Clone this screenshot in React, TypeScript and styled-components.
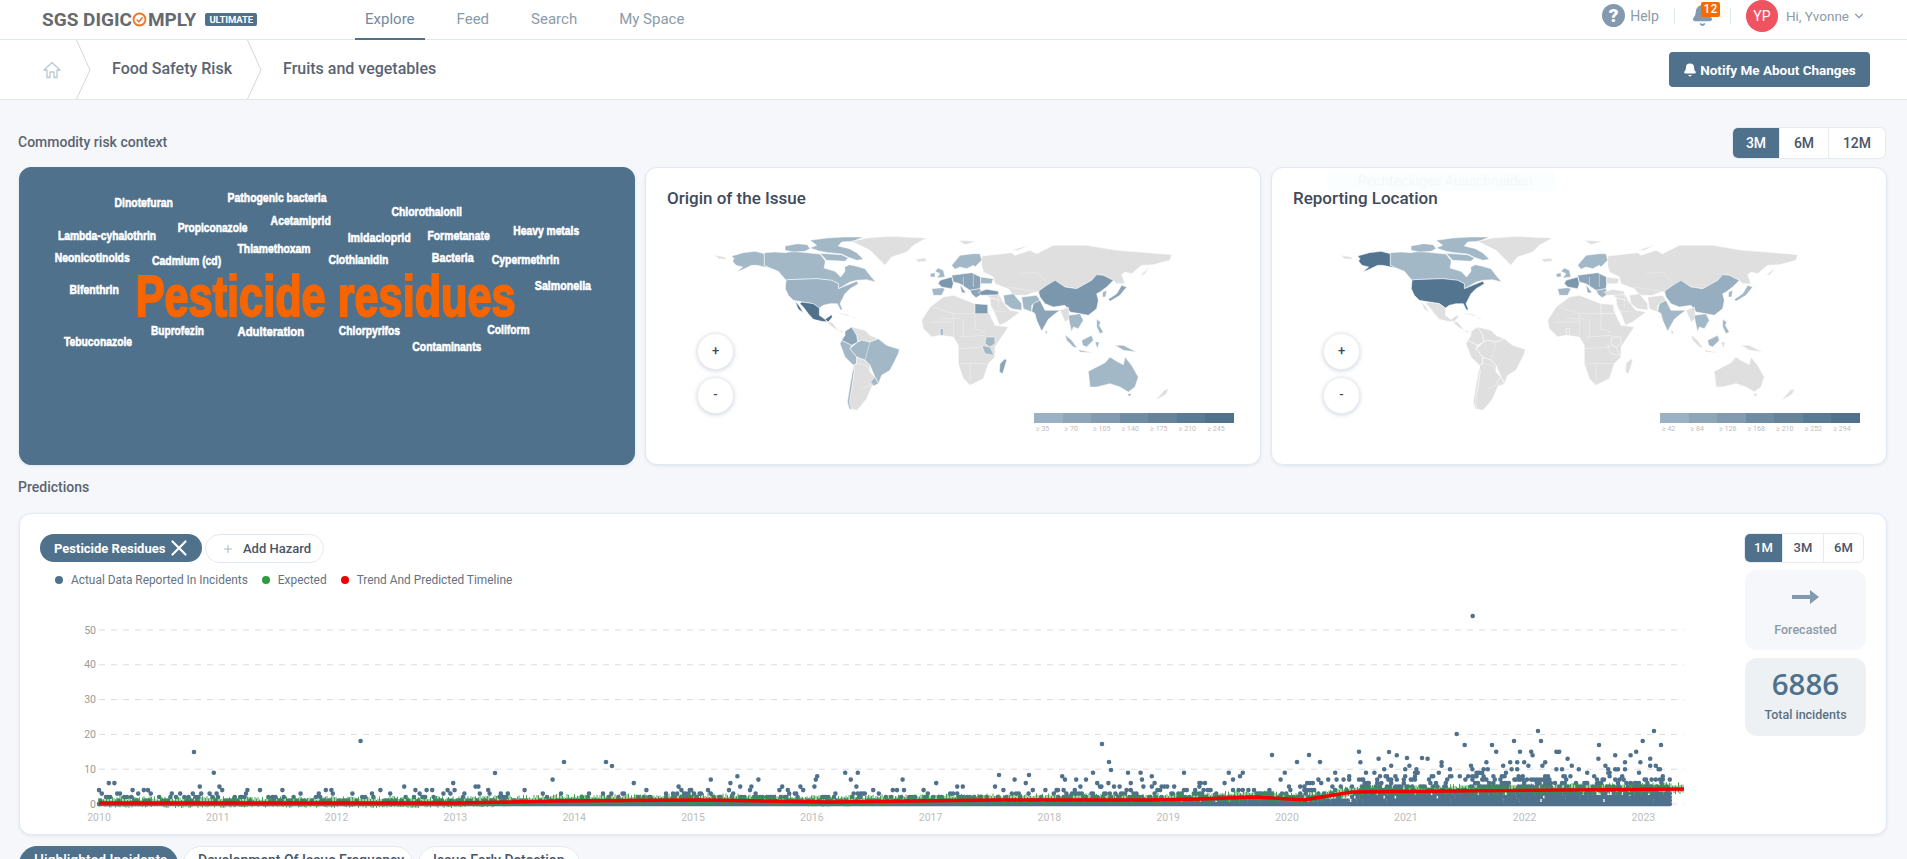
import React from 'react';
import styled, { createGlobalStyle } from 'styled-components';
import { Bell, ChevronDown, Plus, X } from 'lucide-react';

const SLATE = '#4f718c';

const GlobalStyle = createGlobalStyle`
    html, body {
        margin: 0;
        height: 100%;
        overflow: hidden;
        background: #f5f7fa;
        font-family: Roboto, "Liberation Sans", sans-serif;
    }
    * { box-sizing: border-box; }
`;

const Page = styled.div`
    height: 100vh;
    overflow: hidden;
`;

/* top bar */
const TopBar = styled.header`
    height: 40px;
    padding: 0 41px 0 42px;
    display: flex;
    align-items: flex-start;
    background: #fff;
    border-bottom: 1px solid #e1e7ef;
`;

const Logo = styled.div`
    height: 39px;
    display: flex;
    align-items: center;
    color: #666a6e;
    font-size: 19px;
    font-weight: 700;
    white-space: nowrap;
`;

const LogoRing = styled.svg`
    width: 15px;
    height: 15px;
    margin: 0 0.5px;
`;

const PlanBadge = styled.span`
    margin-left: 9px;
    padding: 0 4px;
    height: 13px;
    line-height: 13px;
    border-radius: 2px;
    background: ${SLATE};
    color: #fff;
    font-size: 9.5px;
    font-weight: 700;
    letter-spacing: -0.1px;
`;

const Nav = styled.nav`
    margin-left: 98px;
    display: flex;
    gap: 22px;
`;

const NavItem = styled.a<{ $active?: boolean }>`
    height: 40px;
    padding: 0 10px;
    display: flex;
    align-items: center;
    color: ${p => (p.$active ? '#718aa0' : '#8a9bab')};
    font-size: 15px;
    border-bottom: 2px solid ${p => (p.$active ? SLATE : 'transparent')};
`;

const TopRight = styled.div`
    margin-left: auto;
    height: 31px;
    display: flex;
    align-items: center;
    color: #8a9bab;
    font-size: 14px;
`;

const HelpIcon = styled.span`
    width: 23px;
    height: 23px;
    margin-right: 5px;
    border-radius: 50%;
    background: #8299ae;
    color: #fff;
    font-size: 19px;
    font-weight: 900;
    line-height: 23px;
    text-align: center;
`;

const HelpLabel = styled.span`
    margin-right: 15px;
`;

const Divider = styled.span`
    width: 1px;
    height: 16px;
    background: #dfe5ec;
`;

const BellWrap = styled.div`
    position: relative;
    width: 55px;
    height: 31px;
    display: flex;
    align-items: center;
    padding-left: 16px;
`;

const CountBadge = styled.span`
    position: absolute;
    left: 26px;
    top: 2px;
    width: 19px;
    height: 15px;
    border-radius: 2px;
    background: #f66a00;
    color: #fff;
    font-size: 12px;
    font-weight: 500;
    line-height: 15px;
    text-align: center;
`;

const Avatar = styled.span`
    width: 32px;
    height: 32px;
    margin: 0 8px 0 15px;
    border-radius: 50%;
    background: #ef5360;
    color: #fff;
    font-size: 14px;
    line-height: 32px;
    text-align: center;
`;

const UserName = styled.span`
    margin-right: 3px;
    font-size: 13.5px;
`;

/* breadcrumb */
const CrumbBar = styled.div`
    height: 60px;
    padding: 0 37px 0 43px;
    display: flex;
    align-items: center;
    background: #fff;
    border-bottom: 1px solid #e1e7ef;
`;

const HomeIcon = styled.svg`
    width: 18px;
    height: 18px;
    margin: 0 15px 0 0;
`;

const CrumbArrow = styled.svg`
    width: 15px;
    height: 59px;
`;

const Crumb = styled.span`
    margin: -2px 15px 0 21px;
    color: #5b6472;
    font-size: 16px;
    font-weight: 500;
`;

const NotifyButton = styled.button`
    margin-left: auto;
    width: 201px;
    height: 35px;
    padding: 0;
    border: 0;
    border-radius: 4px;
    background: ${SLATE};
    color: #fff;
    font: 700 13.5px Roboto, sans-serif;
    display: flex;
    align-items: center;
    justify-content: center;
    gap: 3px;
`;

/* page body */
const Content = styled.main`
    padding: 28px 20px 0 19px;
`;

const SectionHead = styled.div`
    height: 30px;
    margin-right: 2px;
    display: flex;
    align-items: center;
    justify-content: space-between;
`;

const SectionTitle = styled.h2`
    margin: -2px 0 0 -1px;
    color: #5b6472;
    font-size: 14px;
    font-weight: 500;
`;

const Toggle = styled.div<{ $w?: number }>`
    ${p => (p.$w ? `width: ${p.$w}px;` : '')}
    display: flex;
    background: #fff;
    border-radius: 5px;
    box-shadow: 0 0 0 1px #e6ebf2;
`;

const ToggleItem = styled.span<{ $active?: boolean; $w: number; $small?: boolean }>`
    width: ${p => p.$w}px;
    height: ${p => (p.$small ? 28 : 30)}px;
    line-height: ${p => (p.$small ? 28 : 30)}px;
    text-align: center;
    color: ${p => (p.$active ? '#fff' : '#4a5568')};
    background: ${p => (p.$active ? SLATE : 'transparent')};
    font-size: ${p => (p.$small ? 13 : 14)}px;
    font-weight: 500;
    border-right: 1px solid #e6ebf2;
    &:first-child { border-radius: 5px 0 0 5px; }
    &:last-child { border-right: 0; }
`;

const CardRow = styled.section`
    margin-top: 9px;
    height: 298px;
    display: grid;
    grid-template-columns: repeat(3, 1fr);
    gap: 10px;
`;

const Card = styled.div`
    position: relative;
    background: #fff;
    border: 1px solid #e3e9f2;
    border-radius: 12px;
    box-shadow: 0 1px 3px rgba(90, 110, 140, 0.12);
`;

const CloudCard = styled(Card)`
    background: ${SLATE};
    border-color: ${SLATE};
    overflow: hidden;
`;

const CloudSvg = styled.svg`
    display: block;
    width: 100%;
    height: 100%;
`;

const CloudWord = styled.text<{ $big?: boolean }>`
    font-family: "Liberation Sans", Arial, sans-serif;
    font-weight: 700;
    font-size: ${p => (p.$big ? 57 : 13)}px;
    fill: ${p => (p.$big ? '#f66500' : '#fff')};
    stroke: ${p => (p.$big ? '#f66500' : '#fff')};
    stroke-width: ${p => (p.$big ? 2 : 0.6)}px;
`;

const MapCard = styled(Card)`
    padding: 20px 0 0 21px;
`;

const MapTitle = styled.h3`
    margin: 0;
    height: 20px;
    color: #3f4a5a;
    font-size: 17px;
    font-weight: 500;
    line-height: 20px;
`;

const MapSvg = styled.svg`
    display: block;
    width: 480px;
    height: 185px;
    margin: 24px 0 0 43px;
    filter: blur(0.25px);
`;

const ZoomStack = styled.div`
    position: absolute;
    left: 51px;
    top: 165px;
    display: flex;
    flex-direction: column;
    gap: 7px;
`;

const ZoomButton = styled.span`
    width: 37px;
    height: 37px;
    border-radius: 50%;
    background: #fff;
    border: 1px solid #eaeef3;
    box-shadow: 0 1px 4px rgba(90, 110, 140, 0.3);
    color: #3f4a5a;
    font-size: 13px;
    font-weight: 500;
    line-height: 34px;
    text-align: center;
`;

const MapLegend = styled.div`
    position: absolute;
    right: 26px;
    top: 245px;
    width: 200px;
    display: grid;
    grid-template-columns: repeat(7, 1fr);
`;

const LegendStep = styled.div<{ $color: string }>`
    border-top: 10px solid ${p => p.$color};
    padding: 2px 0 0 2px;
    color: #bdbdbd;
    font-size: 7px;
    line-height: 9px;
`;

const GhostHint = styled.div`
    position: absolute;
    left: 55px;
    top: 4px;
    width: 228px;
    height: 19px;
    padding-left: 31px;
    background: rgba(240, 253, 253, 0.35);
    color: #f5f8fa;
    font-size: 14px;
    line-height: 19px;
`;

const PredictionHead = styled.div`
    margin-top: 13px;
    height: 20px;
    display: flex;
    align-items: center;
`;

const PredictionCard = styled(Card)`
    margin-top: 15px;
    height: 322px;
    padding: 20px 20px 0 20px;
    display: flex;
    justify-content: space-between;
`;

const ChipRow = styled.div`
    display: flex;
    gap: 3px;
`;

const HazardChip = styled.span`
    width: 162px;
    height: 28px;
    padding-left: 14px;
    display: flex;
    align-items: center;
    gap: 1px;
    border-radius: 14px;
    background: ${SLATE};
    color: #fff;
    font-size: 13px;
    font-weight: 700;
`;

const AddChip = styled.span`
    width: 119px;
    height: 29px;
    padding-left: 16px;
    display: flex;
    align-items: center;
    gap: 9px;
    border: 1px solid #e3e9f2;
    border-radius: 15px;
    color: #4a5568;
    font-size: 13px;
    font-weight: 500;
`;

const ChartLegend = styled.div`
    height: 16px;
    margin-top: 9px;
    padding-left: 15px;
    display: flex;
    align-items: center;
    color: #66727f;
    font-size: 11.9px;
`;

const LegendDot = styled.i<{ $color: string }>`
    width: 8px;
    height: 8px;
    margin-right: 8px;
    border-radius: 50%;
    background: ${p => p.$color};
`;

const LegendLabel = styled.span`
    margin-right: 14px;
`;

const ChartSvg = styled.svg`
    display: block;
    width: 1620px;
    height: 225px;
    margin: 12px 0 0 29px;
`;

const SidePanel = styled.aside`
    width: 121px;
    display: flex;
    flex-direction: column;
`;

const ForecastBox = styled.div`
    height: 80px;
    margin-top: 8px;
    padding-top: 20px;
    border-radius: 12px;
    background: #f5f7fa;
    color: #8c9aa8;
    font-size: 12.5px;
    font-weight: 500;
    text-align: center;
`;

const ForecastArrow = styled.svg`
    display: block;
    width: 27px;
    height: 14px;
    margin: 0 auto 18px;
`;

const TotalBox = styled.div`
    height: 78px;
    margin-top: 8px;
    padding-top: 8px;
    border-radius: 12px;
    background: #eef1f4;
    color: #5a7186;
    font-size: 12.5px;
    font-weight: 500;
    text-align: center;
`;

const TotalValue = styled.div`
    margin-bottom: 5px;
    color: ${SLATE};
    font-family: "Open Sans", sans-serif;
    font-size: 29.5px;
    font-weight: 550;
    line-height: 36px;
`;

const TabRow = styled.div`
    margin-top: 11px;
    display: flex;
    gap: 5px;
`;

const Tab = styled.span<{ $active?: boolean; $w: number }>`
    width: ${p => p.$w}px;
    height: 36px;
    padding-left: 14px;
    border: 1px solid ${p => (p.$active ? SLATE : '#e3e9f2')};
    border-radius: 18px;
    background: ${p => (p.$active ? SLATE : '#fff')};
    color: ${p => (p.$active ? '#fff' : '#4a5568')};
    font-size: 14px;
    font-weight: 500;
    line-height: 26px;
    white-space: nowrap;
`;

/* word cloud, coordinates are px inside the card */
const WORDS: [string, number, number, number][] = [
    ['Dinotefuran', 95.2, 58.7, 34.3],
    ['Pathogenic bacteria', 209, 99.6, 29.3],
    ['Chlorothalonil', 374, 71, 43.3],
    ['Acetamiprid', 252.3, 60.7, 52.3],
    ['Propiconazole', 158.7, 70.3, 59.3],
    ['Lambda-cyhalothrin', 38.2, 98.8, 67.3],
    ['Imidacloprid', 329.9, 63.5, 69.3],
    ['Formetanate', 410.2, 62.7, 67.3],
    ['Heavy metals', 496.6, 66.3, 62.3],
    ['Thiamethoxam', 219, 73.5, 81.3],
    ['Neonicotinoids', 35, 75.5, 90.3],
    ['Cadmium (cd)', 133, 69.5, 93.3],
    ['Clothianidin', 310.6, 60.3, 92.3],
    ['Bacteria', 414.6, 42.2, 90.3],
    ['Cypermethrin', 475, 67.9, 92.3],
    ['Bifenthrin', 49.8, 49.8, 122.3],
    ['Salmonella', 518.3, 56.6, 118.3],
    ['Buprofezin', 131.8, 53.4, 163.3],
    ['Adulteration', 219, 67.1, 164],
    ['Chlorpyrifos', 321, 61.5, 163.3],
    ['Coliform', 470.5, 42.6, 162.3],
    ['Contaminants', 395, 69.5, 179.3],
    ['Tebuconazole', 44.2, 68.7, 174.3],
];

/* world map shapes, traced at 3x. o = colour on origin map, r = on reporting map */
const G = '#dfdfdf';
const L = '#a3b8c7';
const M = '#8ba4b7';
const C = '#7a97ad';
const D = '#4f718c';
const U = '#537590';

type Region = { pts: string; o?: string; r?: string };

const NEW_WORLD: Region[] = [
    { pts: '15,70 45,75 50,82 25,80' },
    { pts: '65,72 100,62 135,58 163,65 163,100 178,108 165,105 140,100 125,100 100,112 80,120 98,105 78,100 68,88 72,80', o: L, r: U },
    { pts: '163,62 195,60 225,62 250,58 290,62 330,66 345,85 345,95 342,108 375,118 392,135 405,118 404,105 418,98 440,103 465,110 480,130 497,150 470,143 440,145 420,150 395,165 385,170 385,155 365,145 320,140 235,143 228,145 205,118 180,108 163,100', o: L, r: L },
    { pts: '330,64 395,68 415,78 405,88 350,85', o: L, r: L },
    { pts: '225,42 262,35 292,38 300,50 285,58 250,60 225,55', o: L, r: L },
    { pts: '300,25 350,18 400,15 460,15 430,28 395,30 385,42 418,50 440,62 460,82 440,85 415,76 395,66 355,62 330,58 300,48 320,40', o: L, r: L },
    { pts: '228,145 235,143 320,140 365,145 385,155 385,170 410,160 440,148 445,155 420,170 405,185 395,205 390,215 397,232 392,235 382,215 360,215 340,220 328,228 310,215 280,210 250,205 235,190 226,170', o: '#9db2c3', r: U },
    { pts: '275,210 310,215 328,228 328,250 345,262 365,248 367,255 355,270 335,268 310,262 295,245 280,225 270,215', o: D },
    { pts: '255,208 268,222 280,242 265,232', o: D },
    { pts: '345,262 355,270 365,270 385,295 400,298 395,302 375,290 360,280' },
    { pts: '375,240 410,245 425,255 400,250', o: '#efefef', r: '#efefef' },
    { pts: '425,255 440,258 430,262', o: '#efefef', r: '#efefef' },
    { pts: '425,285 465,295 480,310 505,320 480,330 455,325 443,330 440,310' },
    { pts: '405,298 425,285 440,310 443,330 425,340 415,335 395,325 405,310', o: M },
    { pts: '390,335 395,325 415,335 425,340 420,350 440,375 440,395 430,400 405,375', o: L },
    { pts: '425,345 443,330 455,325 480,330 505,320 530,340 568,352 565,365 550,395 540,415 515,430 505,455 495,435 480,400 465,385 440,375 420,350', o: L },
    { pts: '440,375 465,385 480,400 480,420 495,435 500,445 485,465 470,500 450,525 440,535 420,530 415,510 425,470 432,420 430,400 440,395' },
    { pts: '430,400 432,420 425,470 418,510 425,535 440,540 418,530 412,510 420,460 428,415', o: L },
    { pts: '495,435 505,455 490,462 482,450', o: L },
    { pts: '425,28 470,18 540,13 650,18 610,40 590,60 545,75 525,100 505,80 480,55' },
    { pts: '615,82 645,78 650,88 625,90' },
];

const OLD_WORLD: Region[] = [
    { pts: '-55,265 -30,225 10,195 40,190 105,215 143,218 148,245 165,280 205,285 185,315 165,345 165,375 145,395 130,440 90,460 70,440 55,395 55,340 40,315 0,310 -25,315 -50,290' },
    { pts: '150,197 185,205 210,235 240,240 200,270 178,280 165,245 152,220' },
    { pts: '140,190 175,186 195,215 212,236 185,206 150,197' },
    { pts: '55,25 110,28 75,38' },
    { pts: '215,55 270,38 235,55' },
    { pts: '125,72 160,68 215,62 225,70 270,55 290,65 340,40 440,40 530,55 600,60 695,68 690,85 640,98 605,100 575,125 555,120 545,128 555,155 530,155 520,145 490,130 470,130 455,145 410,170 375,165 345,148 320,160 295,178 270,185 260,190 220,190 205,170 190,165 165,155 160,135 130,120 125,100' },
    { pts: '600,130 630,105 612,128' },
    { pts: '105,215 143,218 143,245 105,245', o: '#7f9bb0' },
    { pts: '138,315 165,315 165,335 150,345 135,335', o: L },
    { pts: '125,340 150,345 162,370 135,365', o: L },
    { pts: '195,380 200,385 188,425 178,420 180,395', o: M },
    { pts: '0,290 10,290 10,310 2,310', o: L },
    { pts: '-5,108 10,115 15,135 -10,138 0,125 -15,118', o: L, r: L },
    { pts: '-30,125 -15,122 -15,135 -28,135', o: L, r: L },
    { pts: '35,100 60,70 100,65 120,65 125,85 105,105 100,100 80,110 60,105 45,112', o: L, r: L },
    { pts: '35,130 95,122 122,135 122,155 120,170 90,175 60,155 40,150', o: M, r: M },
    { pts: '122,135 160,140 155,155 122,155', o: L, r: '#dfdfdf' },
    { pts: '90,175 120,170 127,186 108,197 96,187', o: M, r: L },
    { pts: '0,145 35,135 40,155 35,170 5,165 -5,155', o: C, r: C },
    { pts: '-25,170 5,167 15,170 5,190 -20,190', o: L, r: L },
    { pts: '60,158 78,182 65,182', o: M, r: M },
    { pts: '115,180 140,172 175,178 175,188 125,190', o: C },
    { pts: '190,190 220,185 245,215 245,235 215,230 195,215', o: L },
    { pts: '245,195 290,190 300,205 275,220 275,240 250,230', o: L },
    { pts: '280,215 300,205 315,235 360,235 345,245 325,262 305,298 290,265 285,245 275,238', o: M, r: L },
    { pts: '315,295 322,300 318,307', o: M, r: L },
    { pts: '295,178 320,160 345,145 375,165 410,170 455,145 470,128 490,130 520,145 500,165 480,180 470,185 475,205 470,230 445,250 420,245 390,240 375,220 340,225 315,215 300,195', o: C, r: '#96aec0' },
    { pts: '488,180 500,175 497,195 487,195', o: L, r: L },
    { pts: '545,160 560,165 540,190 510,208 505,202 530,185', o: M, r: L },
    { pts: '360,235 385,225 390,260 375,270' },
    { pts: '385,250 420,245 430,265 415,290 400,285 395,300 388,270', o: L, r: L },
    { pts: '375,308 395,325 412,348 400,345 380,325', o: L },
    { pts: '425,325 455,310 460,325 440,345 428,340', o: L, r: L },
    { pts: '415,353 460,362 420,360', o: L },
    { pts: '465,330 478,330 472,350', o: L },
    { pts: '470,262 482,270 478,280 490,300 480,305 470,285', o: L, r: L },
    { pts: '525,340 550,340 590,360 550,355', o: L },
    { pts: '445,418 495,392 510,375 530,388 550,398 555,375 575,400 595,435 585,465 565,480 540,465 510,455 470,465 450,465', o: L },
    { pts: '562,485 575,485 568,495', o: L },
    { pts: '685,470 680,485 665,495 645,505 660,490 672,475' },
];

const BORDERS =
    'M-20,225 L40,245 L40,310 M40,245 L105,245 L105,290 L135,300 M0,260 L60,260 M60,315 L135,310 M55,350 L130,345 ' +
    'M60,395 L140,395 M90,395 L90,450 M70,260 L70,315 M-30,270 L40,270 M205,165 L300,180 M240,125 L290,120 L320,150 ' +
    'M175,190 L175,230 M70,135 L70,175 M100,125 L100,165 M150,235 L200,240';

const SA_BORDERS = 'M465,385 L480,330 M440,395 L470,400 L480,420 M455,470 L490,455 M643,270 L700,290 M670,235 L690,260';

const ORIGIN_STEPS = ['≥ 35', '≥ 70', '≥ 105', '≥ 140', '≥ 175', '≥ 210', '≥ 245'];
const REPORT_STEPS = ['≥ 42', '≥ 84', '≥ 126', '≥ 168', '≥ 210', '≥ 252', '≥ 294'];
const STEP_COLORS = ['#9cb1c2', '#8fa6b8', '#829bb0', '#6f8ca3', '#668399', '#587a93', SLATE];

/* chart data. svg uses page coordinates through its viewBox */
const yearX = (y: number) => 100 + (y - 2010) * 118.8;
const valueY = (v: number) => 804 - v * 3.48;
const GRID = [0, 10, 20, 30, 40, 50];
const YEARS = Array.from({ length: 14 }, (_, i) => 2010 + i);

const TREND: [number, number][] = [
    [100, 803], [460, 803], [560, 801], [700, 800], [830, 802], [1000, 800], [1150, 800],
    [1200, 799], [1257, 797], [1305, 800], [1353, 792], [1450, 791], [1685, 789],
];

const trendAt = (x: number) => {
    for (let i = 1; i < TREND.length; i++) {
        const [x0, y0] = TREND[i - 1];
        const [x1, y1] = TREND[i];
        if (x <= x1) return y0 + ((y1 - y0) * (x - x0)) / (x1 - x0);
    }
    return 789;
};

const OUTLIERS: [number, number][] = [
    [195, 752], [361.6, 741], [1473.7, 616], [565, 762], [607, 762], [613, 766], [496, 773], [1103, 744],
    [1457.7, 734], [1539, 731], [1655, 731], [1643.7, 741], [1662, 745], [1515, 741], [1542, 741], [1465.7, 745],
    [1493, 745], [1600, 745], [1273, 755], [1310, 755], [1298, 762], [1321, 762], [1390, 752], [1408, 758], [1423, 758],
    [1110, 762], [1112, 770], [1000, 775], [1030, 775],
];

const buildChart = () => {
    let seed = 20230411;
    const rnd = () => {
        seed = (seed + 0x6d2b79f5) | 0;
        let t = Math.imul(seed ^ (seed >>> 15), 1 | seed);
        t = (t + Math.imul(t ^ (t >>> 7), 61 | t)) ^ t;
        return ((t ^ (t >>> 14)) >>> 0) / 4294967296;
    };
    let dots = '';
    let ticks = '';
    for (let x = 100; x < 1672; x += 1.4) {
        dots += `M${x.toFixed(1)} 804h0`;
        const recent = x > yearX(2020.6);
        const mid = x > yearX(2018);
        const later = x > yearX(2014.5);
        const tries = recent ? 9 : mid ? 3 : later ? 2 : 1;
        const chance = recent ? 0.6 : mid ? 0.5 : later ? 0.45 : 0.5;
        const scale = recent ? 3 : mid ? 2.2 : later ? 1.8 : 1.5;
        for (let k = 0; k < tries; k++) {
            if (rnd() < chance) {
                const v = Math.min(recent ? 15 : 9, 1 + Math.floor(-Math.log(rnd() + 0.001) * scale));
                dots += `M${x.toFixed(1)} ${valueY(v).toFixed(1)}h0`;
            }
        }
    }
    OUTLIERS.forEach(([x, y]) => {
        dots += `M${x} ${y}h0`;
    });
    for (let x = 100; x < 1685; x += 1.5) {
        const y = trendAt(x);
        const h = 3 + rnd() * 4;
        ticks += `M${x.toFixed(1)} ${(y - h).toFixed(1)}v${(h + 2 + rnd() * 3).toFixed(1)}`;
    }
    return { dots, ticks };
};

const CHART = buildChart();
const TREND_LINE = TREND.map(p => p.join(',')).join(' ');

const WorldMap = ({ kind }: { kind: 'o' | 'r' }) => (
    <MapSvg viewBox="0 0 1440 555">
        <g stroke="#fff" strokeWidth="1.5" strokeLinejoin="round">
            {NEW_WORLD.map(r => <polygon key={r.pts} points={r.pts} fill={r[kind] || G} />)}
            <path d={SA_BORDERS} fill="none" stroke="#f3f3f3" />
        </g>
        <g transform="translate(690 0)" stroke="#fff" strokeWidth="1.5" strokeLinejoin="round">
            {OLD_WORLD.map(r => <polygon key={r.pts} points={r.pts} fill={r[kind] || G} />)}
            <path d={BORDERS} fill="none" stroke="#f3f3f3" />
        </g>
    </MapSvg>
);

const MapPanel = ({ title, kind, steps, ghost }: { title: string; kind: 'o' | 'r'; steps: string[]; ghost?: boolean }) => (
    <MapCard>
        {ghost && <GhostHint>Rechteckiges Ausschneiden</GhostHint>}
        <MapTitle>{title}</MapTitle>
        <WorldMap kind={kind} />
        <ZoomStack>
            <ZoomButton>+</ZoomButton>
            <ZoomButton>-</ZoomButton>
        </ZoomStack>
        <MapLegend>
            {steps.map((s, i) => <LegendStep key={s} $color={STEP_COLORS[i]}>{s}</LegendStep>)}
        </MapLegend>
    </MapCard>
);

const Arrow = () => (
    <CrumbArrow viewBox="0 0 15 59">
        <path d="M0.5 0 L14 30 L0.5 59" fill="none" stroke="#cdd7e1" />
    </CrumbArrow>
);

const App = () => {
    return (
        <Page>
            <GlobalStyle />
            <TopBar>
                <Logo>
                    SGS DIGIC
                    <LogoRing viewBox="0 0 16 16">
                        <circle cx="8" cy="8" r="6.4" fill="none" stroke="#e8762c" strokeWidth="2" />
                        <path d="M5 8 L7.4 10.4 L11.2 5.6" fill="none" stroke="#e8762c" strokeWidth="1.6" />
                    </LogoRing>
                    MPLY
                    <PlanBadge>ULTIMATE</PlanBadge>
                </Logo>
                <Nav>
                    <NavItem $active>Explore</NavItem>
                    <NavItem>Feed</NavItem>
                    <NavItem>Search</NavItem>
                    <NavItem>My Space</NavItem>
                </Nav>
                <TopRight>
                    <HelpIcon>?</HelpIcon>
                    <HelpLabel>Help</HelpLabel>
                    <Divider />
                    <BellWrap>
                        <Bell size={23} fill="#8299ae" color="#8299ae" />
                        <CountBadge>12</CountBadge>
                    </BellWrap>
                    <Divider />
                    <Avatar>YP</Avatar>
                    <UserName>Hi, Yvonne</UserName>
                    <ChevronDown size={14} color="#8a9bab" />
                </TopRight>
            </TopBar>

            <CrumbBar>
                <HomeIcon viewBox="0 0 18 18">
                    <path d="M9 1.5 L17 9 H14 V16.5 H11 V11 H7 V16.5 H4 V9 H1 Z" fill="none" stroke="#b9c7d4" strokeWidth="1.3" strokeLinejoin="round" />
                </HomeIcon>
                <Arrow />
                <Crumb>Food Safety Risk</Crumb>
                <Arrow />
                <Crumb>Fruits and vegetables</Crumb>
                <NotifyButton>
                    <Bell size={14} fill="#fff" />
                    Notify Me About Changes
                </NotifyButton>
            </CrumbBar>

            <Content>
                <SectionHead>
                    <SectionTitle>Commodity risk context</SectionTitle>
                    <Toggle>
                        <ToggleItem $active $w={47}>3M</ToggleItem>
                        <ToggleItem $w={49}>6M</ToggleItem>
                        <ToggleItem $w={56}>12M</ToggleItem>
                    </Toggle>
                </SectionHead>

                <CardRow>
                    <CloudCard>
                        <CloudSvg viewBox="0 0 615 298" preserveAspectRatio="xMinYMin">
                            {WORDS.map(([word, x, w, cy]) => (
                                <CloudWord key={word} x={x} y={cy + 4.7} textLength={w} lengthAdjust="spacingAndGlyphs">{word}</CloudWord>
                            ))}
                            <CloudWord $big x={116.5} y={149.5} textLength={382.5} lengthAdjust="spacingAndGlyphs">Pesticide residues</CloudWord>
                        </CloudSvg>
                    </CloudCard>
                    <MapPanel title="Origin of the Issue" kind="o" steps={ORIGIN_STEPS} />
                    <MapPanel title="Reporting Location" kind="r" steps={REPORT_STEPS} ghost />
                </CardRow>

                <PredictionHead>
                    <SectionTitle>Predictions</SectionTitle>
                </PredictionHead>

                <PredictionCard>
                    <div>
                        <ChipRow>
                            <HazardChip>Pesticide Residues <X size={26} color="#fff" strokeWidth={2} /></HazardChip>
                            <AddChip><Plus size={12} color="#aab5c2" />Add Hazard</AddChip>
                        </ChipRow>
                        <ChartLegend>
                            <LegendDot $color={SLATE} /><LegendLabel>Actual Data Reported In Incidents</LegendLabel>
                            <LegendDot $color="#2f9a3f" /><LegendLabel>Expected</LegendLabel>
                            <LegendDot $color="#f00000" /><LegendLabel>Trend And Predicted Timeline</LegendLabel>
                        </ChartLegend>
                        <ChartSvg viewBox="70 600 1620 225">
                            {GRID.map(v => (
                                <g key={v}>
                                    <line x1="100" x2="1685" y1={valueY(v)} y2={valueY(v)} stroke="#d8dce2" strokeDasharray="6 6" />
                                    <text x="97" y={valueY(v) + 3.5} textAnchor="end" fontSize="10.5" fill="#9a9a9a">{v}</text>
                                </g>
                            ))}
                            {YEARS.map(y => (
                                <text key={y} x={yearX(y)} y="820.5" textAnchor="middle" fontSize="10.5" fill="#bcbcbc">{y}</text>
                            ))}
                            <path d={CHART.dots} stroke={SLATE} strokeWidth="4.6" strokeLinecap="round" fill="none" />
                            <path d={CHART.ticks} stroke="#2f9a3f" strokeWidth="0.9" fill="none" />
                            <polyline points={TREND_LINE} stroke="#f00000" strokeWidth="3.4" fill="none" />
                        </ChartSvg>
                    </div>
                    <SidePanel>
                        <Toggle $w={118}>
                            <ToggleItem $small $active $w={38}>1M</ToggleItem>
                            <ToggleItem $small $w={41}>3M</ToggleItem>
                            <ToggleItem $small $w={39}>6M</ToggleItem>
                        </Toggle>
                        <ForecastBox>
                            <ForecastArrow viewBox="0 0 27 14">
                                <path d="M0 5 H18 V0 L27 7 L18 14 V9 H0 Z" fill="#8299ae" />
                            </ForecastArrow>
                            Forecasted
                        </ForecastBox>
                        <TotalBox>
                            <TotalValue>6886</TotalValue>
                            Total incidents
                        </TotalBox>
                    </SidePanel>
                </PredictionCard>

                <TabRow>
                    <Tab $active $w={159}>Highlighted Incidents</Tab>
                    <Tab $w={230}>Development Of Issue Frequency</Tab>
                    <Tab $w={162}>Issue Early Detection</Tab>
                </TabRow>
            </Content>
        </Page>
    );
};

export default App;
